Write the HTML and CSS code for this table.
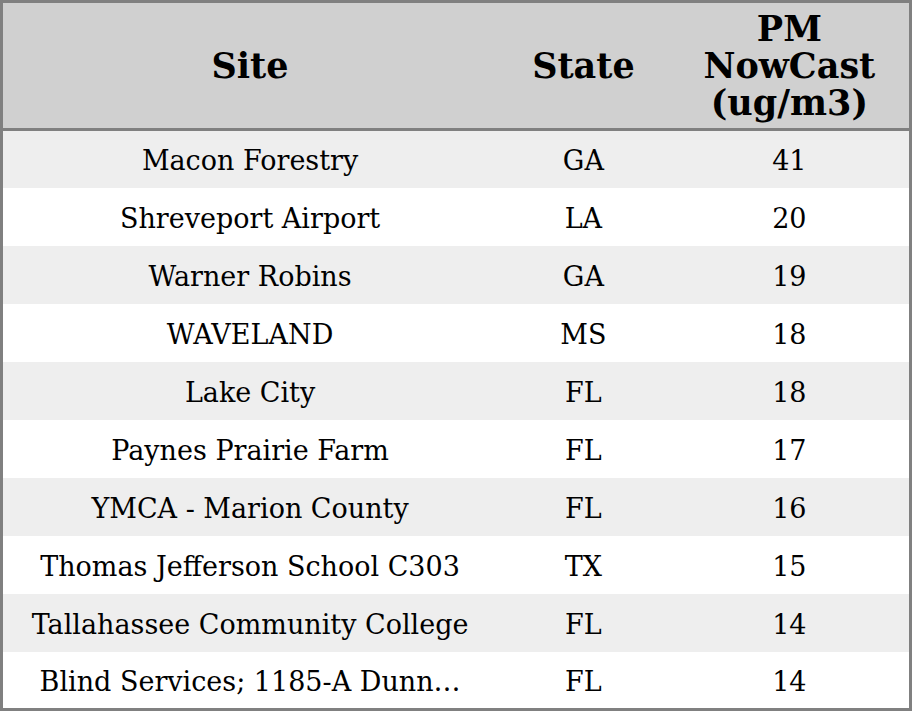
FILE: index.html
```html
<!DOCTYPE html>
<html>
<head>
<meta charset="utf-8">
<link rel="stylesheet" href="styles.css">
</head>
<body>
<table class="grid">
  <colgroup>
    <col class="c-site">
    <col class="c-state">
    <col class="c-pm">
  </colgroup>
  <thead>
    <tr class="head">
      <th>Site</th>
      <th>State</th>
      <th>PM<br>NowCast<br>(ug/m3)</th>
    </tr>
  </thead>
  <tbody>
    <tr class="odd"><td>Macon Forestry</td><td>GA</td><td>41</td></tr>
    <tr><td>Shreveport Airport</td><td>LA</td><td>20</td></tr>
    <tr class="odd"><td>Warner Robins</td><td>GA</td><td>19</td></tr>
    <tr><td>WAVELAND</td><td>MS</td><td>18</td></tr>
    <tr class="odd"><td>Lake City</td><td>FL</td><td>18</td></tr>
    <tr><td>Paynes Prairie Farm</td><td>FL</td><td>17</td></tr>
    <tr class="odd"><td>YMCA - Marion County</td><td>FL</td><td>16</td></tr>
    <tr><td>Thomas Jefferson School C303</td><td>TX</td><td>15</td></tr>
    <tr class="odd"><td>Tallahassee Community College</td><td>FL</td><td>14</td></tr>
    <tr><td>Blind Services; 1185-A Dunn…</td><td>FL</td><td>14</td></tr>
  </tbody>
</table>
</body>
</html>
```
FILE: styles.css
```css
html, body {
  margin: 0;
  padding: 0;
  background: #ffffff;
}
.grid {
  width: 912px;
  height: 711px;
  border-collapse: collapse;
  table-layout: fixed;
  border: 3px solid #808080;
  font-family: "DejaVu Serif", serif;
  color: #000;
}
.c-site { width: 494px; }
.c-state { width: 172px; }
.c-pm { width: 240px; }
.head {
  background: #d0d0d0;
  height: 128px;
}
.head th {
  font-weight: bold;
  font-size: 35px;
  line-height: 37px;
  text-align: center;
  vertical-align: middle;
  padding: 0 0 1px;
  border-bottom: 3px solid #808080;
}
tbody tr {
  height: 57px;
  background: #ffffff;
}
tbody tr.odd {
  background: #eeeeee;
}
tbody td {
  font-size: 27px;
  text-align: center;
  vertical-align: middle;
  padding: 3px 0 0;
  white-space: nowrap;
}
```
